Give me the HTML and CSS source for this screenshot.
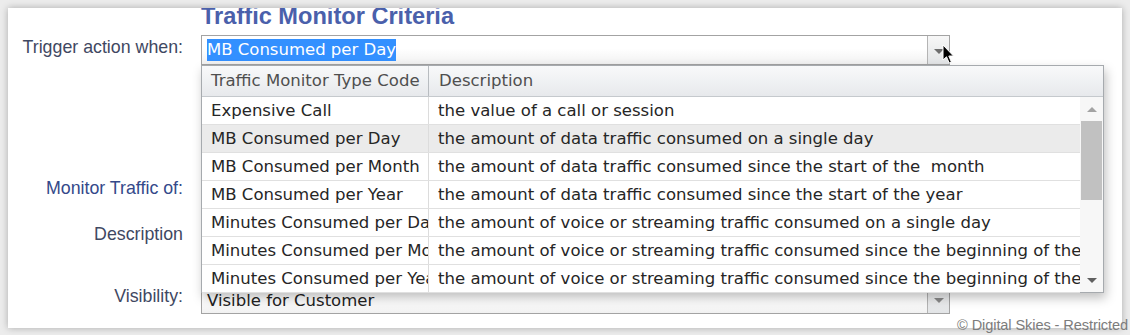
FILE: index.html
```html
<!DOCTYPE html>
<html lang="en">
<head>
    <meta charset="UTF-8">
    <title>Traffic Monitor Criteria</title>
    <link rel="stylesheet" href="styles.css">
</head>
<body>
    <div class="card">
        <h2 class="title">Traffic Monitor Criteria</h2>
        <div class="form">
            <div class="row row-trigger">
                <label class="label">Trigger action when:</label>
                <div class="field">
                    <div class="combo">
                        <span class="combo-text"><span class="selected">MB Consumed per Day</span></span>
                        <span class="combo-btn"><span class="caret"></span></span>
                    </div>
                    <svg class="cursor" width="13" height="21" viewBox="0 0 13 21" xmlns="http://www.w3.org/2000/svg">
                        <path d="M1 1 L1 16 L4.5 12.8 L7.2 19 L9.4 18 L6.8 12 L11.5 12 Z" fill="#000" stroke="#fff" stroke-width="1"/>
                    </svg>
                    <div class="dropdown">
                        <div class="dd-head">
                            <div class="dd-hcell dd-code">Traffic Monitor Type Code</div>
                            <div class="dd-hcell dd-desc">Description</div>
                        </div>
                        <div class="dd-body">
                            <div class="dd-rows">
                                <div class="dd-row">
                                    <div class="dd-cell dd-code">Expensive Call</div>
                                    <div class="dd-cell dd-desc">the value of a call or session</div>
                                </div>
                                <div class="dd-row is-active">
                                    <div class="dd-cell dd-code">MB Consumed per Day</div>
                                    <div class="dd-cell dd-desc">the amount of data traffic consumed on a single day</div>
                                </div>
                                <div class="dd-row">
                                    <div class="dd-cell dd-code">MB Consumed per Month</div>
                                    <div class="dd-cell dd-desc">the amount of data traffic consumed since the start of the&nbsp; month</div>
                                </div>
                                <div class="dd-row">
                                    <div class="dd-cell dd-code">MB Consumed per Year</div>
                                    <div class="dd-cell dd-desc">the amount of data traffic consumed since the start of the year</div>
                                </div>
                                <div class="dd-row">
                                    <div class="dd-cell dd-code">Minutes Consumed per Day</div>
                                    <div class="dd-cell dd-desc">the amount of voice or streaming traffic consumed on a single day</div>
                                </div>
                                <div class="dd-row">
                                    <div class="dd-cell dd-code">Minutes Consumed per Month</div>
                                    <div class="dd-cell dd-desc">the amount of voice or streaming traffic consumed since the beginning of the month</div>
                                </div>
                                <div class="dd-row">
                                    <div class="dd-cell dd-code">Minutes Consumed per Year</div>
                                    <div class="dd-cell dd-desc">the amount of voice or streaming traffic consumed since the beginning of the year</div>
                                </div>
                            </div>
                            <div class="scrollbar">
                                <span class="sb-btn"><span class="sb-up"></span></span>
                                <span class="sb-thumb"></span>
                                <span class="sb-space"></span>
                                <span class="sb-btn"><span class="sb-down"></span></span>
                            </div>
                        </div>
                    </div>
                </div>
            </div>
            <div class="row row-monitor">
                <label class="label label-blue">Monitor Traffic of:</label>
                <div class="field"><div class="placeholder"></div></div>
            </div>
            <div class="row row-desc">
                <label class="label">Description</label>
                <div class="field"><div class="placeholder"></div></div>
            </div>
            <div class="row row-visibility">
                <label class="label">Visibility:</label>
                <div class="field">
                    <div class="combo combo-vis">
                        <span class="combo-text">Visible for Customer</span>
                        <span class="combo-btn"><span class="caret caret-light"></span></span>
                    </div>
                </div>
            </div>
        </div>
    </div>
    <div class="footer">&copy; Digital Skies - Restricted</div>
</body>
</html>
```

FILE: styles.css
```css
body {
    margin: 0;
    background: #ececec;
    font-family: "Liberation Sans", Arial, sans-serif;
}

/* white panel */
.card {
    position: relative;
    margin: 8px;
    width: 1114px;
    height: 320px;
    background: #fff;
    box-shadow: 0 0 7px rgba(0, 0, 0, 0.28);
    overflow: hidden;
}
.title {
    margin: -4px 0 0 193px;
    font-size: 23.6px;
    line-height: 24px;
    font-weight: bold;
    color: #4a60ab;
}

.form {
    display: flex;
    flex-direction: column;
}
.row {
    display: flex;
    align-items: flex-start;
    gap: 18px;
}
.row-trigger { margin-top: 7px; }
.row-monitor { margin-top: 111px; }
.row-desc { margin-top: 16px; }
.row-visibility { margin-top: 32px; }

.label {
    width: 175px;
    text-align: right;
    font-size: 17.8px;
    line-height: 24px;
    color: #3f4862;
}
.label-blue {
    color: #34498a;
}
.field {
    position: relative;
    width: 749px;
}
.row-visibility .field {
    margin-top: 1px;
}
.placeholder {
    height: 30px;
}

/* combo box */
.combo {
    display: flex;
    height: 30px;
    box-sizing: border-box;
    border: 1px solid #a3a3a3;
    background: linear-gradient(#fff 45%, #f1f1f1);
    font-family: "DejaVu Sans", Verdana, sans-serif;
    font-size: 16.5px;
    color: #222;
}
.combo-vis {
    height: 29px;
}
.combo-text {
    flex: 1;
    padding-left: 5px;
    line-height: 28px;
    white-space: nowrap;
    overflow: hidden;
}
.combo-vis .combo-text {
    line-height: 30px;
}
.selected {
    background: #3390ff;
    color: #fff;
    padding: 1px 0 2px;
}
.combo-btn {
    display: flex;
    align-items: center;
    justify-content: center;
    width: 21px;
    border-left: 1px solid #b4b4b4;
    background: linear-gradient(#f7f7f7, #e2e4e6);
}
.caret {
    width: 0;
    height: 0;
    border-left: 5px solid transparent;
    border-right: 5px solid transparent;
    border-top: 5px solid #6e6e6e;
    margin-top: 2px;
}
.caret-light {
    border-top-color: #8a8a8a;
}
.cursor {
    position: absolute;
    left: 741px;
    top: 9px;
    z-index: 3;
}

/* dropdown list */
.dropdown {
    position: absolute;
    top: 30px;
    left: 0;
    z-index: 2;
    width: 903px;
    height: 228px;
    box-sizing: border-box;
    border: 1px solid #a6aaae;
    background: #fff;
    box-shadow: 2px 5px 10px rgba(0, 0, 0, 0.25);
    font-family: "DejaVu Sans", Verdana, sans-serif;
    font-size: 16.55px;
    color: #262626;
}
.dd-head {
    display: flex;
    height: 31px;
    box-sizing: border-box;
    border-bottom: 1px solid #c5c9cd;
    background: linear-gradient(#f8f9fa, #e7e9ec);
    color: #4f4f4f;
}
.dd-hcell {
    line-height: 30px;
    white-space: nowrap;
}
.dd-code {
    width: 227px;
    box-sizing: border-box;
    padding-left: 9px;
    border-right: 1px solid #dcdcdc;
    overflow: hidden;
}
.dd-head .dd-code {
    border-right-color: #b8bcc0;
}
.dd-desc {
    flex: 1;
    padding-left: 9px;
    overflow: hidden;
}
.dd-head .dd-desc {
    padding-left: 10px;
}
.dd-body {
    display: flex;
}
.dd-rows {
    width: 878px;
}
.dd-row {
    display: flex;
    height: 28px;
    box-sizing: border-box;
    border-bottom: 1px solid #e0e0e0;
}
.dd-row.is-active {
    background: #ebebeb;
}
.dd-cell {
    line-height: 28px;
    white-space: nowrap;
}

/* scrollbar */
.scrollbar {
    display: flex;
    flex-direction: column;
    width: 23px;
    height: 195px;
    background: #f7f7f7;
}
.sb-btn {
    display: flex;
    align-items: center;
    justify-content: center;
    height: 24px;
}
.sb-up, .sb-down {
    width: 0;
    height: 0;
    border-left: 5px solid transparent;
    border-right: 5px solid transparent;
}
.sb-up {
    border-bottom: 5px solid #a3a3a3;
}
.sb-down {
    border-top: 5px solid #606060;
}
.sb-thumb {
    height: 79px;
    margin: 0 1px;
    background: #c1c1c1;
}
.sb-space {
    flex: 1;
}

.footer {
    position: absolute;
    right: 2px;
    top: 317px;
    font-size: 14.6px;
    line-height: 17px;
    letter-spacing: -0.1px;
    color: #7c7c7c;
}
```
